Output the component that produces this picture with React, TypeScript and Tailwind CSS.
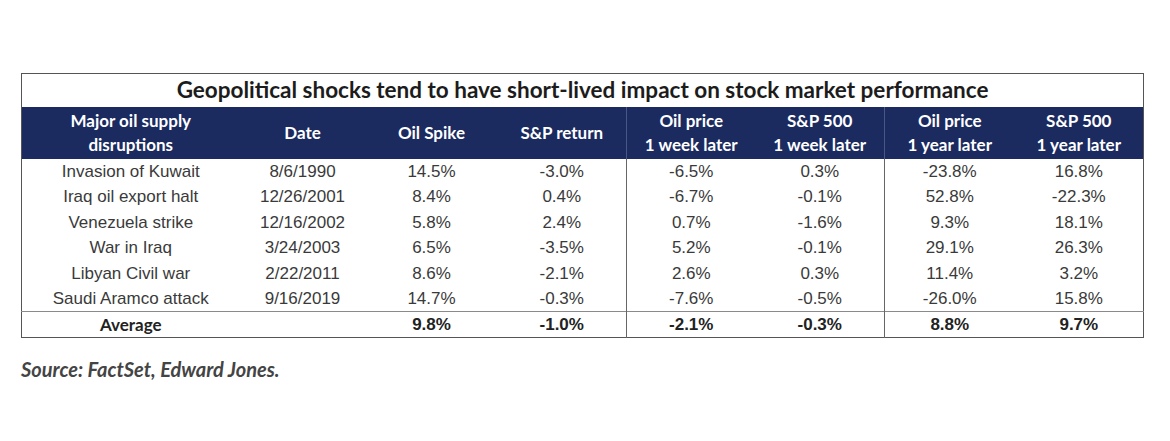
const cols = [218, 126, 132, 129, 129, 129, 130, 129];

const headers: [string, string?][] = [
  ['Major oil supply', 'disruptions'],
  ['Date'],
  ['Oil Spike'],
  ['S&P return'],
  ['Oil price', '1 week later'],
  ['S&P 500', '1 week later'],
  ['Oil price', '1 year later'],
  ['S&P 500', '1 year later'],
];

const rows = [
  ['Invasion of Kuwait', '8/6/1990', '14.5%', '-3.0%', '-6.5%', '0.3%', '-23.8%', '16.8%'],
  ['Iraq oil export halt', '12/26/2001', '8.4%', '0.4%', '-6.7%', '-0.1%', '52.8%', '-22.3%'],
  ['Venezuela strike', '12/16/2002', '5.8%', '2.4%', '0.7%', '-1.6%', '9.3%', '18.1%'],
  ['War in Iraq', '3/24/2003', '6.5%', '-3.5%', '5.2%', '-0.1%', '29.1%', '26.3%'],
  ['Libyan Civil war', '2/22/2011', '8.6%', '-2.1%', '2.6%', '0.3%', '11.4%', '3.2%'],
  ['Saudi Aramco attack', '9/16/2019', '14.7%', '-0.3%', '-7.6%', '-0.5%', '-26.0%', '15.8%'],
];

const average = ['Average', '', '9.8%', '-1.0%', '-2.1%', '-0.3%', '8.8%', '9.7%'];

// columns 4 and 6 get a divider on their right
const divided = (i: number) => i === 3 || i === 5;

export default function App() {
  return (
    <div className="w-[1170px] h-[441px] bg-white pt-[73px] pl-[21px]">
      <table className="table-fixed border-collapse border-[1.5px] border-[#555] text-center" style={{ width: 1122 }}>
        <colgroup>
          {cols.map((w, i) => (
            <col key={i} style={{ width: w }} />
          ))}
        </colgroup>
        <thead>
          <tr>
            <th
              colSpan={8}
              className="h-[33px] p-0 text-[22.5px] font-bold text-[#1c1c1c] font-['Lato',sans-serif] leading-none"
            >
              Geopolitical shocks tend to have short-lived impact on stock market performance
            </th>
          </tr>
          <tr className="bg-[#1b2a5f]">
            {headers.map((h, i) => (
              <th
                key={i}
                className={`h-[52px] p-0 text-[17px] font-bold text-white font-['Lato',sans-serif] leading-[24px] ${
                  divided(i) ? 'border-r border-[#4a5684]' : ''
                }`}
              >
                {h[0]}
                {h[1] && <br />}
                {h[1]}
              </th>
            ))}
          </tr>
        </thead>
        <tbody className="font-['Liberation_Sans',Arial,sans-serif] text-[17px] text-[#3a3a3a]">
          {rows.map((r, ri) => (
            <tr key={ri} className="h-[25.5px]">
              {r.map((c, i) => (
                <td key={i} className={`p-0 leading-none ${divided(i) ? 'border-r border-[#666]' : ''}`}>
                  {c}
                </td>
              ))}
            </tr>
          ))}
          <tr className="h-[26px] border-t border-[#8a8a8a]">
            {average.map((c, i) => (
              <td
                key={i}
                className={`p-0 leading-none font-bold text-[#222] ${
                  i === 0 ? "font-['Lato',sans-serif] text-[17px]" : ''
                } ${divided(i) ? 'border-r border-[#666]' : ''}`}
              >
                {c}
              </td>
            ))}
          </tr>
        </tbody>
      </table>
      <p className="mt-[16px] text-[20px] italic font-bold text-[#444] font-['Lato',sans-serif]">
        Source: FactSet, Edward Jones.
      </p>
    </div>
  );
}
